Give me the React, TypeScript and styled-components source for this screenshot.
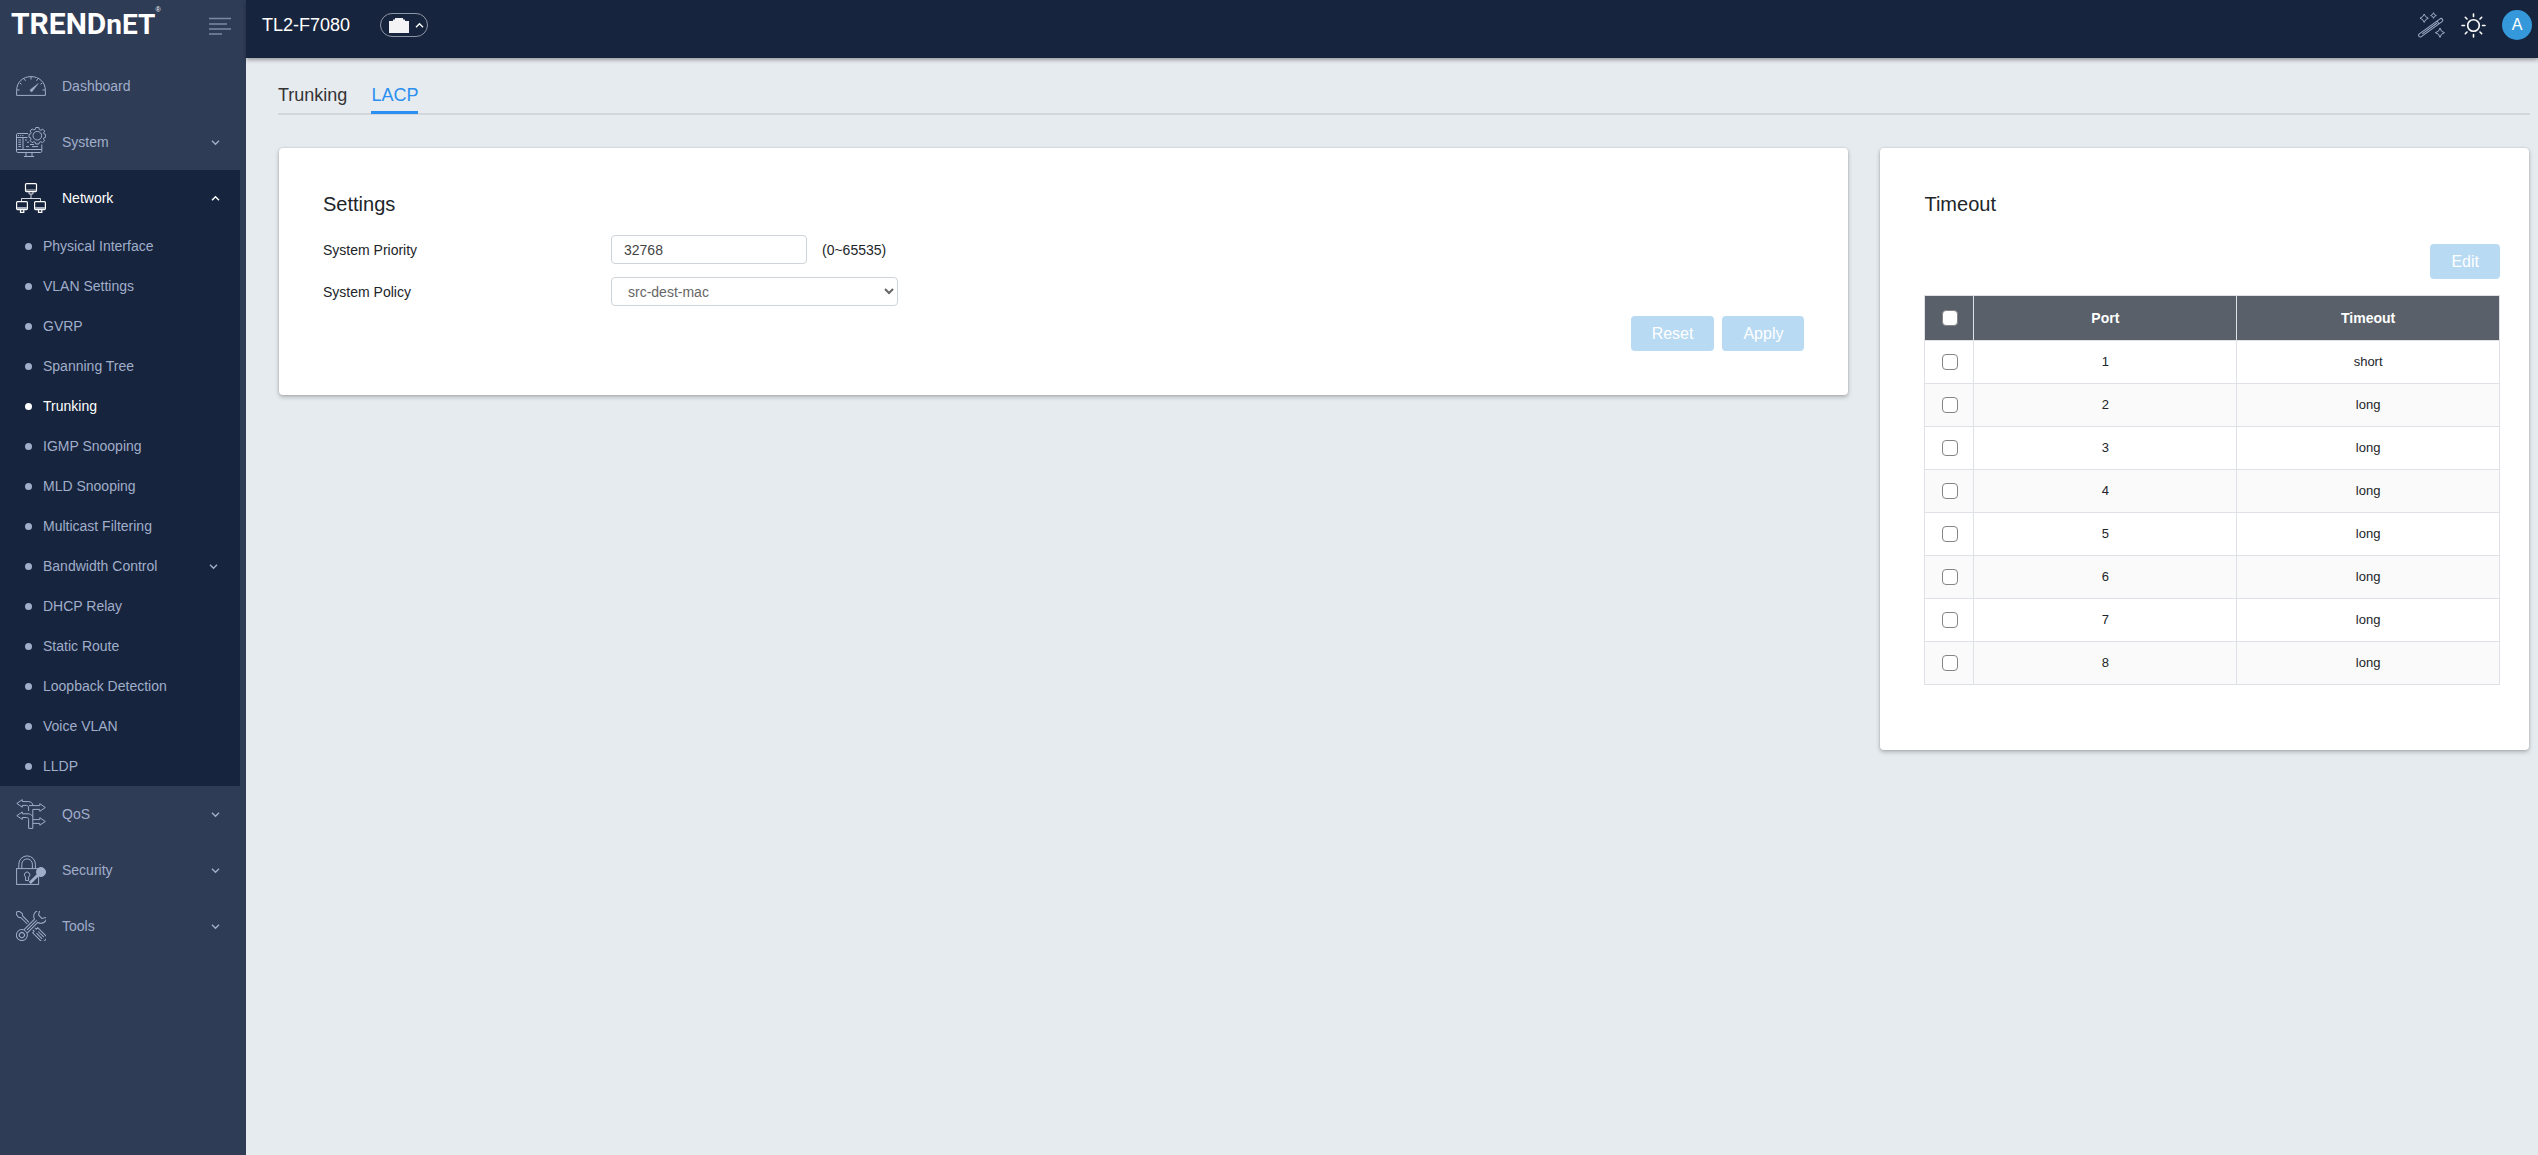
import React, { useState } from "react";
import styled, { createGlobalStyle } from "styled-components";

const color = {
  sidebar: "#2f3c56",
  dark: "#17243d",
  muted: "#a0aeca",
  page: "#e6ebef",
  text: "#212529",
  blue: "#2a8ff0",
  pale: "#b8daf3",
  line: "#dee2e6",
};

const GlobalStyle = createGlobalStyle`
  *, *::before, *::after { box-sizing: border-box; }
  body {
    margin: 0;
    background: ${color.page};
    color: ${color.text};
    font: 14px/20px "Liberation Sans", Arial, sans-serif;
  }
  button, input, select { font: inherit; margin: 0; }
  ul { list-style: none; margin: 0; padding: 0; }
  svg { display: block; flex: none; }
`;

const Shell = styled.div`
  display: flex;
  min-height: 100vh;
`;

const Sidebar = styled.aside`
  flex: none;
  width: 246px;
  background: ${color.sidebar};
`;

const Brand = styled.div`
  display: flex;
  justify-content: space-between;
  align-items: flex-start;
  height: 58px;
  padding: 6px 14px 0 11px;
`;

const Logo = styled.a`
  display: flex;
  align-items: baseline;
  color: #fff;
  font: bold 30px/36px Roboto, sans-serif;
  text-decoration: none;
`;

const LogoTail = styled.span`
  font-size: 28px;
`;

const Registered = styled.sup`
  align-self: flex-start;
  font: 7px/8px "Liberation Sans", Arial, sans-serif;
`;

const IconButton = styled.button`
  display: flex;
  padding: 0;
  border: 0;
  background: none;
  color: ${(p) => p.color || color.muted};
  cursor: pointer;
`;

const MenuToggle = styled(IconButton)`
  margin-top: 11px;
`;

const Nav = styled.nav`
  width: 240px;
`;

const Section = styled.li<{ $open?: boolean }>`
  background: ${(p) => (p.$open ? color.dark : "transparent")};
`;

const SectionButton = styled.button<{ $open?: boolean }>`
  display: flex;
  align-items: center;
  gap: 16px;
  width: 100%;
  height: 56px;
  padding: 0 20px 0 16px;
  border: 0;
  background: none;
  color: ${(p) => (p.$open ? "#fff" : color.muted)};
  text-align: left;
  cursor: pointer;
`;

const Grow = styled.span`
  flex: 1;
`;

const SubLink = styled.a<{ $active?: boolean }>`
  display: flex;
  align-items: center;
  gap: 11px;
  height: 40px;
  padding: 0 22px 0 25px;
  color: ${(p) => (p.$active ? "#fff" : color.muted)};
  text-decoration: none;

  &::before {
    content: "";
    width: 7px;
    height: 7px;
    border-radius: 50%;
    background: currentColor;
  }
`;

const Body = styled.div`
  flex: 1;
  min-width: 0;
`;

const Header = styled.header`
  display: flex;
  align-items: center;
  height: 58px;
  padding: 0 6px 8px 16px;
  background: ${color.dark};
  color: #fff;
  box-shadow: 0 2px 4px rgba(0, 0, 0, 0.35);
`;

const Model = styled.h1`
  margin: 0;
  font-size: 18px;
  line-height: 24px;
  font-weight: 400;
`;

const PortButton = styled.button`
  display: flex;
  align-items: center;
  gap: 6px;
  width: 48px;
  height: 24px;
  margin-left: 30px;
  padding: 0 5px 0 8px;
  border: 1px solid #8d96a6;
  border-radius: 12px;
  background: none;
  color: #fff;
  cursor: pointer;
`;

const HeaderActions = styled.div`
  display: flex;
  align-items: center;
  gap: 16px;
  margin-left: auto;
`;

const Avatar = styled.button`
  width: 30px;
  height: 30px;
  padding: 0;
  border: 0;
  border-radius: 50%;
  background: #3498db;
  color: #fff;
  font: 16px/30px "Liberation Sans", Arial, sans-serif;
  cursor: pointer;
`;

const Main = styled.main`
  padding: 24px 8px 32px 32px;
`;

const Tabs = styled.nav`
  display: flex;
  gap: 24px;
  border-bottom: 2px solid #d3d7db;
`;

const Tab = styled.a<{ $active?: boolean }>`
  margin-bottom: -1px;
  padding-bottom: 3px;
  border-bottom: 3px solid ${(p) => (p.$active ? color.blue : "transparent")};
  color: ${(p) => (p.$active ? color.blue : "#333")};
  font-size: 18px;
  line-height: 26px;
  text-decoration: none;
`;

const Cards = styled.div`
  display: grid;
  grid-template-columns: minmax(0, 2.42fr) minmax(0, 1fr);
  align-items: start;
  gap: 32px;
  margin: 33px 1px 0;
`;

const Card = styled.section`
  padding: 44px;
  border-radius: 4px;
  background: #fff;
  box-shadow: 0 2px 4px rgba(0, 0, 0, 0.25), 0 0 2px rgba(0, 0, 0, 0.15);
`;

const TableCard = styled(Card)`
  padding: 44px 29px 65px 44px;
`;

const CardTitle = styled.h2`
  margin: 0;
  font-size: 20px;
  line-height: 24px;
  font-weight: 400;
`;

const Form = styled.form`
  display: grid;
  gap: 13px;
  margin-top: 19px;
`;

const Field = styled.div`
  display: grid;
  grid-template-columns: 288px auto auto;
  justify-content: start;
  align-items: center;
`;

const TextBox = styled.input`
  width: 196px;
  height: 29px;
  padding: 0 12px;
  border: 1px solid #ced4da;
  border-radius: 4px;
  background: #fff;
  color: #444;
`;

const Select = styled.select`
  width: 287px;
  height: 29px;
  padding: 0 0 0 12px;
  border: 1px solid #ced4da;
  border-radius: 4px;
  background: #fff;
  color: #666;
`;

const Hint = styled.span`
  margin-left: 15px;
`;

const Actions = styled.div<{ $top: number }>`
  display: flex;
  justify-content: flex-end;
  gap: 8px;
  margin-top: ${(p) => p.$top}px;
`;

const Button = styled.button`
  height: 35px;
  padding: 0 21px;
  border: 0;
  border-radius: 4px;
  background: ${color.pale};
  color: #fff;
  font-size: 16px;
`;

const Table = styled.table`
  width: 100%;
  margin-top: 16px;
  border-collapse: collapse;
  table-layout: fixed;
  text-align: center;

  th, td {
    padding: 0;
    border: 1px solid ${color.line};
  }
  th {
    height: 45px;
    background: #59606a;
    color: #fff;
  }
  td {
    height: 43px;
    font-size: 13px;
  }
  th:first-child, td:first-child { padding-left: 2px; }
  tbody tr:nth-child(even) { background: #fafafa; }
`;

const CheckCol = styled.col`
  width: 49px;
`;

const Check = styled.input`
  appearance: none;
  display: block;
  width: 16px;
  height: 16px;
  margin: 0 auto;
  border: 1px solid #858585;
  border-radius: 4px;
  background: #fff;

  &:checked {
    border-color: ${color.blue};
    background: ${color.blue};
    box-shadow: inset 0 0 0 3px #fff;
  }
`;

const Chevron = ({ up }: { up?: boolean }) => (
  <svg width="9" height="9" viewBox="0 0 9 9" fill="none" stroke="currentColor" strokeWidth="1.4" aria-hidden="true">
    <path d={up ? "M1 6.3 4.5 2.8 8 6.3" : "M1 2.8 4.5 6.3 8 2.8"} />
  </svg>
);

const NavIcon = ({ children }: { children: React.ReactNode }) => (
  <svg width="30" height="30" viewBox="0 0 30 30" fill="none" stroke="currentColor" strokeWidth="1" aria-hidden="true">
    {children}
  </svg>
);

const DashboardIcon = () => (
  <NavIcon>
    <path d="M.6 24.4V19.8C.6 11 7 5.6 15 5.6S29.4 11 29.4 19.8V24.4Z" />
    <path d="M15 6V8.5M8.3 7.8 9.5 9.8M21.7 7.8 20.5 9.8M3.8 12 5.5 13.2M26.2 12 24.5 13.2M1 19H3.5M29 19H26.5" />
    <path d="M22.3 12.5 16.2 20.5A1.4 1.4 0 0 1 14.2 18.8Z" fill="currentColor" strokeWidth=".5" />
  </NavIcon>
);

const gear =
  "M19.8 .5H22.8L23.3 2.6 24.9 3.3 26.7 2.1 28.7 4.1 27.6 5.9 28.2 7 29.6 7.4V10.2L28.1 10.7 27.5 12 28.5 13.7 26.5 15.7 24.8 14.7 23.3 15.3 22.8 17H19.8L19.3 15.3 17.8 14.7 16.1 15.7 14.1 13.7 15.1 12 14.5 10.7 13 10.2V7.4L14.5 7 15.1 5.6 14.1 3.9 16.1 1.9 17.8 2.9 19.3 2.4Z";

const SystemIcon = () => (
  <NavIcon>
    <path d="M12 6.5H1.8A1.3 1.3 0 0 0 .5 7.8V24.2A1.3 1.3 0 0 0 1.8 25.5H24.5A1.3 1.3 0 0 0 25.8 24.2V17.5M.5 22.5H25.8M10 25.5V29.2M16 25.5V29.2M8 29.5H18.2" />
    <path d={gear} />
    <circle cx="21.3" cy="8.7" r="4.3" />
    <path d="M7 10.5V22M.5 10.5H11.5M2 8.5H3M4.2 8.5H5.2M6.4 8.5H7.4M2.3 13H5M2.3 15.2H5M2.3 17.4H5M2.3 19.6H5M9 13H11M11 15.2H13M14 17.5H18M16 19.6H22M10 19.6H13" />
  </NavIcon>
);

const NetworkIcon = () => (
  <NavIcon>
    <rect x="9.5" y=".6" width="11" height="8" rx="1" strokeWidth="1.2" />
    <path d="M9.5 7H20.5M13 9V11H17V9M15 11V15.5M5.5 18V15.5H24.5V18" opacity=".8" />
    <rect x="1.2" y="24" width="9.6" height="2.5" fill="#a6aec0" stroke="none" />
    <rect x="19.2" y="24" width="9.6" height="2.5" fill="#a6aec0" stroke="none" />
    <rect x=".6" y="18.6" width="10.8" height="8" rx="1" strokeWidth="1.2" />
    <rect x="18.6" y="18.6" width="10.8" height="8" rx="1" strokeWidth="1.2" />
    <path d="M4.5 27V29.4H7.8V27M22.5 27V29.4H25.8V27" strokeWidth="1.2" />
  </NavIcon>
);

const QosIcon = () => (
  <NavIcon>
    <path d="M12.6 12V9C12.6 7.5 12 6.4 10.5 6.4H6.3V8.2L.8 4.4 6.3 .7V2.6H12.5C15 2.6 16.6 4 17 6.6" />
    <path d="M13 6.6H23.8V4.7L29.3 8.5 23.8 12.3V10.4H16.8V29.4H12.6V20.6C12.6 19.2 12 18.5 10.5 18.5H6.3V20.4L.8 16.7 6.3 13V14.8H12C14 14.8 15.5 15.5 16.6 17.5" />
    <path d="M17 20.6H23.8V18.7L29.3 22.5 23.8 26.2V24.4H17" />
  </NavIcon>
);

const SecurityIcon = () => (
  <NavIcon>
    <rect x=".6" y="13.6" width="22" height="15.8" />
    <path d="M2.8 13.5V9.2A8.3 8.3 0 0 1 19.4 9.2V13.5M5.8 13.5V9.2A5.3 5.3 0 0 1 16.4 9.2V13.5" />
    <path d="M9.6 22A2.7 2.7 0 1 1 12.6 22V25.5H9.6Z" />
    <circle cx="25" cy="17" r="4.5" fill="currentColor" />
    <path d="M22.5 19.5 13.8 28" strokeWidth="3" />
  </NavIcon>
);

const ToolsIcon = () => (
  <NavIcon>
    <g transform="translate(15 15) rotate(45)">
      <path d="M-4 -1.2H-13L-15 -2.7 -19 -2 -20 0 -19 2 -15 2.7 -13 1.2H-4M4 -1.5H6V-3.6H17.5A3 3 0 0 1 20 -1V1A3 3 0 0 1 17.5 3.6H6V1.5H4M9 -1.2H17M9 1.2H17" />
    </g>
    <g transform="translate(15 15) rotate(-45)">
      <circle cx="-12.9" r="5.5" />
      <circle cx="-12.9" r="2.6" />
      <path d="M-7.8 -2.3H7.3A6 6 0 0 1 17.3 -5L13 -2.3V2.3L17.3 5A6 6 0 0 1 7.3 2.3H-7.8M-5.5 0H8" />
    </g>
  </NavIcon>
);

const WandIcon = () => (
  <svg width="27" height="27" viewBox="0 0 27 27" fill="none" stroke="currentColor" strokeWidth="1" aria-hidden="true">
    <g transform="translate(12.7 15.7) rotate(-36)">
      <rect x="-14.5" y="-1.7" width="29" height="3.4" rx="1.7" />
      <path d="M-10.5 0H8M9 -1.7V1.7" />
    </g>
    <path d="M6.2 2 7.7 4.7 10.3 6.2 7.7 7.7 6.2 10.4 4.7 7.7 2 6.2 4.7 4.7Z" />
    <path d="M15.5 .7 16.4 2.6 18.3 3.5 16.4 4.4 15.5 6.3 14.6 4.4 12.7 3.5 14.6 2.6Z" />
    <path d="M22 16 23.5 19.2 26.5 20.7 23.5 22.2 22 25.4 20.5 22.2 17.3 20.7 20.5 19.2Z" />
  </svg>
);

const SunIcon = () => (
  <svg width="25" height="25" viewBox="0 0 25 25" fill="none" stroke="currentColor" strokeWidth="1.6" strokeLinecap="round" aria-hidden="true">
    <circle cx="12.5" cy="12.5" r="5.8" />
    <path d="M12.5 1V3.5M12.5 21.5V24M1 12.5H3.5M21.5 12.5H24M4.3 4.3 6 6M19 19 20.7 20.7M4.3 20.7 6 19M19 6 20.7 4.3" />
  </svg>
);

const MenuIcon = () => (
  <svg width="23" height="18" viewBox="0 0 23 18" stroke="#7d89a2" strokeWidth="1.6" aria-hidden="true">
    <path d="M0 1.5H22M0 7H18M0 12H22M0 17H13" />
  </svg>
);

const JackIcon = () => (
  <svg width="20" height="15" viewBox="0 0 20 15" aria-hidden="true">
    <path d="M0 3H4V1.5H6V0H14V1.5H16V3H20V15H0Z" fill="#f3f3f5" />
  </svg>
);

const sections = [
  { name: "Dashboard", icon: DashboardIcon, leaf: true },
  { name: "System", icon: SystemIcon },
  { name: "Network", icon: NetworkIcon, open: true },
  { name: "QoS", icon: QosIcon },
  { name: "Security", icon: SecurityIcon },
  { name: "Tools", icon: ToolsIcon },
];

const networkPages = [
  "Physical Interface",
  "VLAN Settings",
  "GVRP",
  "Spanning Tree",
  "Trunking",
  "IGMP Snooping",
  "MLD Snooping",
  "Multicast Filtering",
  "Bandwidth Control",
  "DHCP Relay",
  "Static Route",
  "Loopback Detection",
  "Voice VLAN",
  "LLDP",
];

const ports = [1, 2, 3, 4, 5, 6, 7, 8].map((port) => ({
  port,
  timeout: port === 1 ? "short" : "long",
}));

export default function App() {
  const [priority, setPriority] = useState("32768");

  return (
    <Shell>
      <GlobalStyle />
      <Sidebar>
        <Brand>
          <Logo href="#home">
            TREND<LogoTail>nET</LogoTail>
            <Registered>®</Registered>
          </Logo>
          <MenuToggle type="button" aria-label="Toggle menu">
            <MenuIcon />
          </MenuToggle>
        </Brand>
        <Nav aria-label="Main">
          <ul>
            {sections.map(({ name, icon: Icon, leaf, open }) => (
              <Section key={name} $open={open}>
                <SectionButton type="button" $open={open} aria-expanded={leaf ? undefined : !!open}>
                  <Icon />
                  <Grow>{name}</Grow>
                  {!leaf && <Chevron up={open} />}
                </SectionButton>
                {open && (
                  <ul>
                    {networkPages.map((page) => (
                      <li key={page}>
                        <SubLink href="#page" $active={page === "Trunking"}>
                          <Grow>{page}</Grow>
                          {page === "Bandwidth Control" && <Chevron />}
                        </SubLink>
                      </li>
                    ))}
                  </ul>
                )}
              </Section>
            ))}
          </ul>
        </Nav>
      </Sidebar>

      <Body>
        <Header>
          <Model>TL2-F7080</Model>
          <PortButton type="button" aria-label="Port status">
            <JackIcon />
            <Chevron up />
          </PortButton>
          <HeaderActions>
            <IconButton type="button" aria-label="Wizard">
              <WandIcon />
            </IconButton>
            <IconButton type="button" color="#fff" aria-label="Theme">
              <SunIcon />
            </IconButton>
            <Avatar type="button">A</Avatar>
          </HeaderActions>
        </Header>

        <Main>
          <Tabs aria-label="Trunking pages">
            <Tab href="#trunking">Trunking</Tab>
            <Tab href="#lacp" $active>
              LACP
            </Tab>
          </Tabs>

          <Cards>
            <Card>
              <CardTitle>Settings</CardTitle>
              <Form id="lacp-form">
                <Field>
                  <label htmlFor="priority">System Priority</label>
                  <TextBox id="priority" value={priority} onChange={(e) => setPriority(e.target.value)} />
                  <Hint>(0~65535)</Hint>
                </Field>
                <Field>
                  <label htmlFor="policy">System Policy</label>
                  <Select id="policy" defaultValue="src-dest-mac">
                    <option>src-dest-mac</option>
                  </Select>
                </Field>
              </Form>
              <Actions $top={10}>
                <Button type="reset" form="lacp-form" disabled>
                  Reset
                </Button>
                <Button type="submit" form="lacp-form" disabled>
                  Apply
                </Button>
              </Actions>
            </Card>

            <TableCard>
              <CardTitle>Timeout</CardTitle>
              <Actions $top={28}>
                <Button type="button" disabled>
                  Edit
                </Button>
              </Actions>
              <Table>
                <colgroup>
                  <CheckCol />
                  <col />
                  <col />
                </colgroup>
                <thead>
                  <tr>
                    <th>
                      <Check type="checkbox" aria-label="Select all ports" />
                    </th>
                    <th>Port</th>
                    <th>Timeout</th>
                  </tr>
                </thead>
                <tbody>
                  {ports.map(({ port, timeout }) => (
                    <tr key={port}>
                      <td>
                        <Check type="checkbox" aria-label={`Select port ${port}`} />
                      </td>
                      <td>{port}</td>
                      <td>{timeout}</td>
                    </tr>
                  ))}
                </tbody>
              </Table>
            </TableCard>
          </Cards>
        </Main>
      </Body>
    </Shell>
  );
}
